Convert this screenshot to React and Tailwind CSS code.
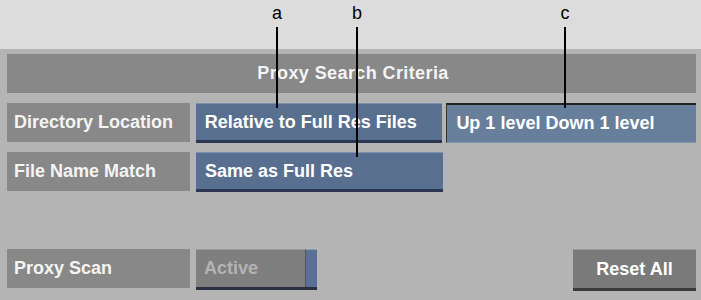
import React from "react";

const font = { fontFamily: '"Liberation Sans", Arial, sans-serif' };

function Label({ children }) {
  return (
    <div className="flex h-[39px] w-[183px] items-center bg-[#888888] pl-[7px] text-[18px] font-bold text-[#f4f4f4]">
      {children}
    </div>
  );
}

function BlueButton({ children }) {
  return (
    <div className="flex h-[40px] w-[247px] items-center border-t border-t-[#7d90ad] border-b-[3px] border-b-[#2c3553] bg-[#586f90] pl-[9px] text-[18px] font-bold text-white">
      {children}
    </div>
  );
}

function Callout({ letter, x, bottom }) {
  return (
    <div className="absolute top-0 flex flex-col items-center" style={{ left: x - 10, width: 20 }}>
      <span className="mt-[3px] text-[18px] leading-[20px] text-black">{letter}</span>
      <div className="mt-[4px] w-[2px] bg-black" style={{ height: bottom - 27 }} />
    </div>
  );
}

export default function App() {
  return (
    <div className="relative h-[300px] w-[701px] overflow-hidden bg-[#b4b4b4]" style={font}>
      <div className="h-[49px] bg-[#dcdcdc]" />

      <div className="flex flex-col pl-[7px] pr-[5px] pt-[5px]">
        <div className="flex h-[39px] w-[689px] items-center justify-center bg-[#888888] pl-[3px] text-[18px] font-bold tracking-[0.4px] text-[#f4f4f4]">
          Proxy Search Criteria
        </div>

        <div className="mt-[10px] flex gap-[6px]">
          <Label>Directory Location</Label>
          <BlueButton>Relative to Full Res Files</BlueButton>
          <div className="ml-[-2px] flex h-[40px] w-[250px] items-center border-t-2 border-l border-t-[#222222] border-l-[#333333] border-b border-b-[#8497b0] bg-[#687f9b] pl-[9px] text-[18px] font-bold text-white">
            Up 1 level Down 1 level
          </div>
        </div>

        <div className="mt-[9px] flex gap-[6px]">
          <Label>File Name Match</Label>
          <BlueButton>Same as Full Res</BlueButton>
        </div>

        <div className="mt-[57px] flex items-start gap-[6px]">
          <Label>Proxy Scan</Label>
          <div className="flex h-[41px] w-[121px] border-b-[3px] border-b-[#2a2f40]">
            <div className="flex flex-1 items-center border-t border-t-[#9a9a9a] border-r border-r-[#555555] bg-[#7f7f7f] pl-[8px] text-[18px] font-bold text-[#b3b3b3]">
              Active
            </div>
            <div className="w-[11px] border-t border-t-[#8ea0bb] bg-[#5a7095]" />
          </div>
          <div className="flex-1" />
          <div className="flex h-[42px] w-[123px] items-center justify-center border-t border-t-[#999999] border-b-[3px] border-b-[#3a3a3a] bg-[#7a7a7a] text-[18px] font-bold text-white">
            Reset All
          </div>
        </div>
      </div>

      <Callout letter="a" x={277} bottom={108} />
      <Callout letter="b" x={357} bottom={157} />
      <Callout letter="c" x={565} bottom={108} />
    </div>
  );
}
